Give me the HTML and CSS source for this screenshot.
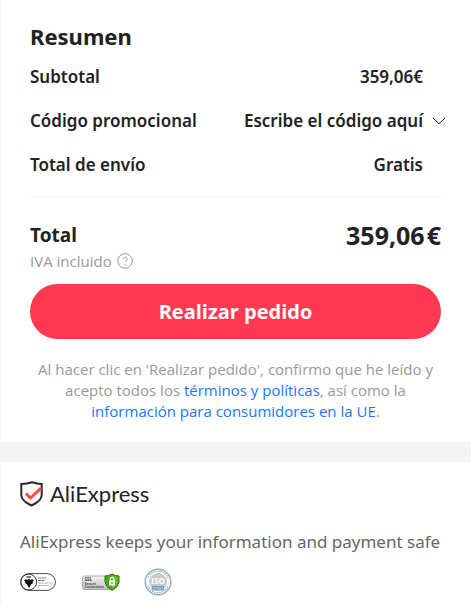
FILE: index.html
```html
<!DOCTYPE html>
<html lang="es">
<head>
<meta charset="utf-8">
<meta name="viewport" content="width=device-width, initial-scale=1">
<title>Resumen</title>
<link rel="stylesheet" href="styles.css">
</head>
<body>
<main class="page">
  <section class="summary">
    <h1 class="title">Resumen</h1>
    <dl class="rows">
      <div class="row"><dt>Subtotal</dt><dd>359,06€</dd></div>
      <div class="row">
        <dt>Código promocional</dt>
        <dd>
          <button class="promo" type="button">Escribe el código aquí
            <svg class="chevron" viewBox="0 0 14 8" aria-hidden="true"><path d="M1 1l6 5.800 6-5.800"/></svg>
          </button>
        </dd>
      </div>
      <div class="row"><dt>Total de envío</dt><dd>Gratis</dd></div>
    </dl>
    <div class="total">
      <span class="total-label">Total</span>
      <span class="total-price"><span>359,06</span><span>€</span></span>
    </div>
    <div class="tax">
      <span>IVA incluido</span>
      <svg class="help" viewBox="0 0 16 16" aria-hidden="true"><circle cx="8" cy="8" r="7.300"/><path d="M5.800 6.300c0-2.900 4.500-2.800 4.500-.2 0 1.600-2.200 1.700-2.200 3.400M8.100 11v1.200"/></svg>
    </div>
    <button class="order" type="button">Realizar pedido</button>
    <p class="legal">Al hacer clic en 'Realizar pedido', confirmo que he leído y acepto todos los <a href="#">términos y políticas</a>, así como la <a href="#">información para consumidores en la UE</a>.</p>
  </section>
  <section class="safety">
    <div class="brand">
      <svg class="shield" viewBox="0 0 24 26" aria-hidden="true">
        <path class="shield-line" d="M1.300 3Q7 2.600 12 1.200Q17 2.600 21.700 3V14Q21.500 20 11.500 24.500Q1.500 20 1.300 14Z"/>
        <path class="shield-check" d="M6 12.500l4.500 4.500L21 7.200"/>
      </svg>
      <span>AliExpress</span>
    </div>
    <p class="safe-text">AliExpress keeps your information and payment safe</p>
    <div class="badges">
      <svg class="badge-bsi" viewBox="0 0 36 18" role="img" aria-label="Certificación">
        <rect x=".6" y=".6" width="34.800" height="16.800" rx="8.400" fill="#fff" stroke="#4b4b4b"/>
        <circle cx="8.800" cy="9" r="7.900" fill="#fff" stroke="#333"/>
        <path d="M4 7.500L6 6l1.500 1L9 5.500 10.500 7 12 6l2 1.500-1.500 1.500.5 1-2 1.500L9 15l-2-3.500L5 10l.5-1z" fill="#111"/>
        <path d="M6.500 4h4.500" stroke="#444" stroke-width="1.400"/>
        <path d="M18 5h8M18 7.500h7" stroke="#777" stroke-width="1.100" stroke-dasharray="3 .4"/>
        <path d="M18 10h15M18 12.500h11" stroke="#aaa" stroke-dasharray="3 .5"/>
      </svg>
      <svg class="badge-ssl" viewBox="0 0 38 18" role="img" aria-label="SSL Secure Connection">
        <defs><linearGradient id="silver" x2="0" y2="1"><stop stop-color="#f3f3f3"/><stop offset="1" stop-color="#bdbdbd"/></linearGradient></defs>
        <rect x=".5" y="3" width="29" height="13.500" rx="2" fill="url(#silver)" stroke="#aaa"/>
        <g fill="#444">
          <text x="2.500" y="7.800" font-size="4.500" font-weight="700">SSL</text>
          <text x="2.500" y="11.500" font-size="3.500" font-weight="600">Secure</text>
          <text x="2.500" y="15" font-size="3.500" font-weight="600">Connection</text>
        </g>
        <path d="M30 1q3.500 2 7 2v6q-.5 5-7 8.500q-6.500-3.500-7-8.500V3q3.500 0 7-2z" fill="#46a818" stroke="#237c08"/>
        <path d="M30 2.500q2.800 1.500 5.500 1.500v5q-.4 4-5.500 7z" fill="#69c530"/>
        <path d="M28.300 8V6q0-1.700 1.700-1.700T31.700 6v2" fill="none" stroke="#fff" stroke-width="1.200"/>
        <rect x="27" y="7.500" width="6" height="5" rx=".5" fill="#fff"/>
        <circle cx="30" cy="10" r=".9" fill="#46a818"/>
      </svg>
      <svg class="badge-iso" viewBox="0 0 28 28" role="img" aria-label="ISO 27001">
        <circle cx="14" cy="14" r="12.800" fill="#fff" stroke="#91aec1" stroke-width="1.500"/>
        <circle cx="14" cy="14" r="10.800" fill="none" stroke="#a8bdca" stroke-width="1.500" stroke-dasharray="1.600 .8"/>
        <circle cx="14" cy="14" r="9" fill="#c9c9c9"/>
        <path d="M2.500 10h2v8h-2zM23.500 10h2v8h-2z" fill="#fff"/>
        <text x="14" y="16.200" font-size="8" font-weight="700" text-anchor="middle" fill="#fff">ISO</text>
        <rect x="8" y="18" width="12" height="4.500" fill="#6f9dbb"/>
        <text x="14" y="21.700" font-size="3.800" text-anchor="middle" fill="#dce9f1">27001</text>
      </svg>
    </div>
  </section>
</main>
</body>
</html>
```
FILE: styles.css
```css
* { box-sizing: border-box; }
body {
  margin: 0;
  background: #fff;
  color: #222;
  font-family: "Noto Sans", sans-serif;
}
h1, dl, dd, p { margin: 0; }
button {
  border: 0;
  padding: 0;
  color: inherit;
  background: none;
  font: inherit;
}
a { color: #1677ff; text-decoration: none; }
.page {
  margin-right: 4px;
  border-left: 1px solid #f5f5f5;
}
.summary {
  padding: 20px 30px 20px 29px;
  border-bottom: 20px solid #f3f3f3;
}
.title { font-size: 22px; line-height: 32px; font-weight: 700; }
.rows {
  display: grid;
  gap: 20px;
  padding: 13px 0 19px;
  border-bottom: 1px solid #f1f1f1;
  font-size: 17px;
  line-height: 24px;
  font-weight: 600;
}
.row { display: flex; justify-content: space-between; padding-right: 18px; }
.promo { display: block; position: relative; }
.chevron {
  position: absolute;
  left: 100%;
  top: 8px;
  width: 14px;
  height: 8px;
  margin-left: 9px;
  fill: none;
  stroke: #222;
}
.total {
  display: flex;
  justify-content: space-between;
  align-items: center;
  padding-top: 20px;
  line-height: 36px;
  font-weight: 700;
}
.total-label { font-size: 19px; }
.total-price { display: flex; gap: 2px; font-size: 25px; }
.tax {
  display: flex;
  align-items: center;
  gap: 5px;
  color: #999;
  font-family: "Open Sans", sans-serif;
  font-size: 15px;
  line-height: 16px;
}
.help { width: 16px; height: 16px; fill: none; stroke: #999; }
.order {
  display: block;
  width: 100%;
  height: 55px;
  margin-top: 15px;
  border-radius: 28px;
  background: #ff3a50;
  color: #fff;
  font-family: "Open Sans", sans-serif;
  font-size: 20px;
  font-weight: 700;
}
.legal {
  padding: 20px 6px 0;
  color: #999;
  font-family: "Open Sans", sans-serif;
  font-size: 15px;
  line-height: 21px;
  text-align: center;
}
.safety { padding: 16px 19px 8px; }
.brand {
  display: flex;
  align-items: center;
  gap: 6px;
  font-family: Lato, sans-serif;
  font-size: 22px;
  line-height: 32px;
}
.shield { width: 24px; height: 26px; fill: none; }
.shield-line { stroke: #282828; stroke-width: 2; }
.shield-check { stroke: #ff4a3d; stroke-width: 3; }
.safe-text {
  margin-top: 18px;
  color: #666;
  font-size: 17px;
  line-height: 28px;
}
.badges { display: flex; align-items: center; margin-top: 12px; }
.badge-bsi { width: 36px; height: 18px; }
.badge-ssl { width: 38px; height: 18px; margin-left: 26px; }
.badge-iso { width: 28px; height: 28px; margin-left: 24px; }
```
